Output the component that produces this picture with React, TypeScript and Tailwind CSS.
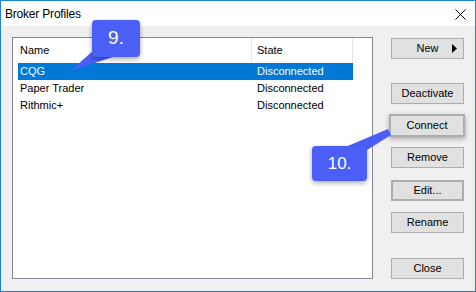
import React from "react"

const rows = [
  { name: "CQG", state: "Disconnected", selected: true },
  { name: "Paper Trader", state: "Disconnected" },
  { name: "Rithmic+", state: "Disconnected" },
]

function Btn({ label, className = "", children }: { label: string; className?: string; children?: React.ReactNode }) {
  return (
    <div
      className={
        "w-[73px] h-[21px] bg-[#e1e1e1] border border-[#adadad] flex items-center justify-center text-[11px] text-black " +
        className
      }
    >
      {label}
      {children}
    </div>
  )
}

export default function App() {
  return (
    <div className="relative w-[476px] h-[292px] font-['Liberation_Sans',Arial,sans-serif] text-black">
      <div className="w-full h-full border border-[#1883d7] flex flex-col">
        {/* title bar */}
        <div className="h-[25px] bg-white flex items-center justify-between pl-[4px] pr-[9px]">
          <span className="text-[12px] tracking-[-0.2px]">Broker Profiles</span>
          <svg width="11" height="11" viewBox="0 0 11 11" className="mt-[1px]">
            <path d="M0.5 0.5 L10.5 10.5 M10.5 0.5 L0.5 10.5" stroke="#000" strokeWidth="1" />
          </svg>
        </div>

        {/* client */}
        <div className="flex-1 bg-[#f0f0f0] flex pl-[11px] pr-[11px] pt-[11px] pb-[12px] gap-[18px]">
          {/* list view */}
          <div className="w-[361px] h-full bg-white border border-[#828790] flex flex-col text-[11px]">
            <div className="h-[25px] flex shrink-0">
              <div className="w-[239px] border-r border-[#e5e5e5] flex items-center pl-[7px]">Name</div>
              <div className="w-[101px] border-r border-[#e5e5e5] flex items-center pl-[5px]">State</div>
            </div>
            <div className="ml-[5px] flex flex-col">
              {rows.map((r) => (
                <div
                  key={r.name}
                  className={
                    "w-[335px] h-[17px] flex items-center " + (r.selected ? "bg-[#0078d7] text-white" : "")
                  }
                >
                  <div className="w-[233px] pl-[2px]">{r.name}</div>
                  <div className="pl-[6px]">{r.state}</div>
                </div>
              ))}
            </div>
          </div>

          {/* buttons */}
          <div className="w-[73px] flex flex-col">
            <Btn label="New" className="mt-[1px] relative">
              <svg width="5" height="9" viewBox="0 0 5 9" className="absolute right-[6px] top-[5px]">
                <path d="M0 0 L5 4.5 L0 9 Z" fill="#000" />
              </svg>
            </Btn>
            <Btn label="Deactivate" className="mt-[24px]" />
            <Btn
              label="Connect"
              className="mt-[10px] -ml-[2px] w-[76px] h-[23px] border-2 border-[#4b5ff6] shadow-[0_2px_5px_rgba(0,0,0,0.3)]"
            />
            <Btn label="Remove" className="mt-[10px]" />
            <Btn label="Edit..." className="mt-[12px] border-2 border-[#0078d7]" />
            <Btn label="Rename" className="mt-[11px]" />
            <Btn label="Close" className="mt-[25px]" />
          </div>
        </div>
      </div>

      {/* annotation tails */}
      <svg className="absolute left-0 top-0 pointer-events-none" width="476" height="292" viewBox="0 0 476 292">
        <polygon points="94,50 70,71 116,56" fill="#4b5ff6" />
        <polygon points="343,148 388,129 391,135 367,150" fill="#4b5ff6" />
      </svg>

      {/* annotation badges */}
      <div className="absolute left-[92px] top-[20px] w-[48px] h-[37px] rounded-[4px] bg-[#4b5ff6] shadow-[0_2px_5px_rgba(0,0,0,0.35)] flex items-center justify-center text-white text-[19px]">
        9.
      </div>
      <div className="absolute left-[312px] top-[146px] w-[55px] h-[35px] rounded-[4px] bg-[#4b5ff6] shadow-[0_2px_5px_rgba(0,0,0,0.35)] flex items-center justify-center text-white text-[17px]">
        10.
      </div>
    </div>
  )
}
